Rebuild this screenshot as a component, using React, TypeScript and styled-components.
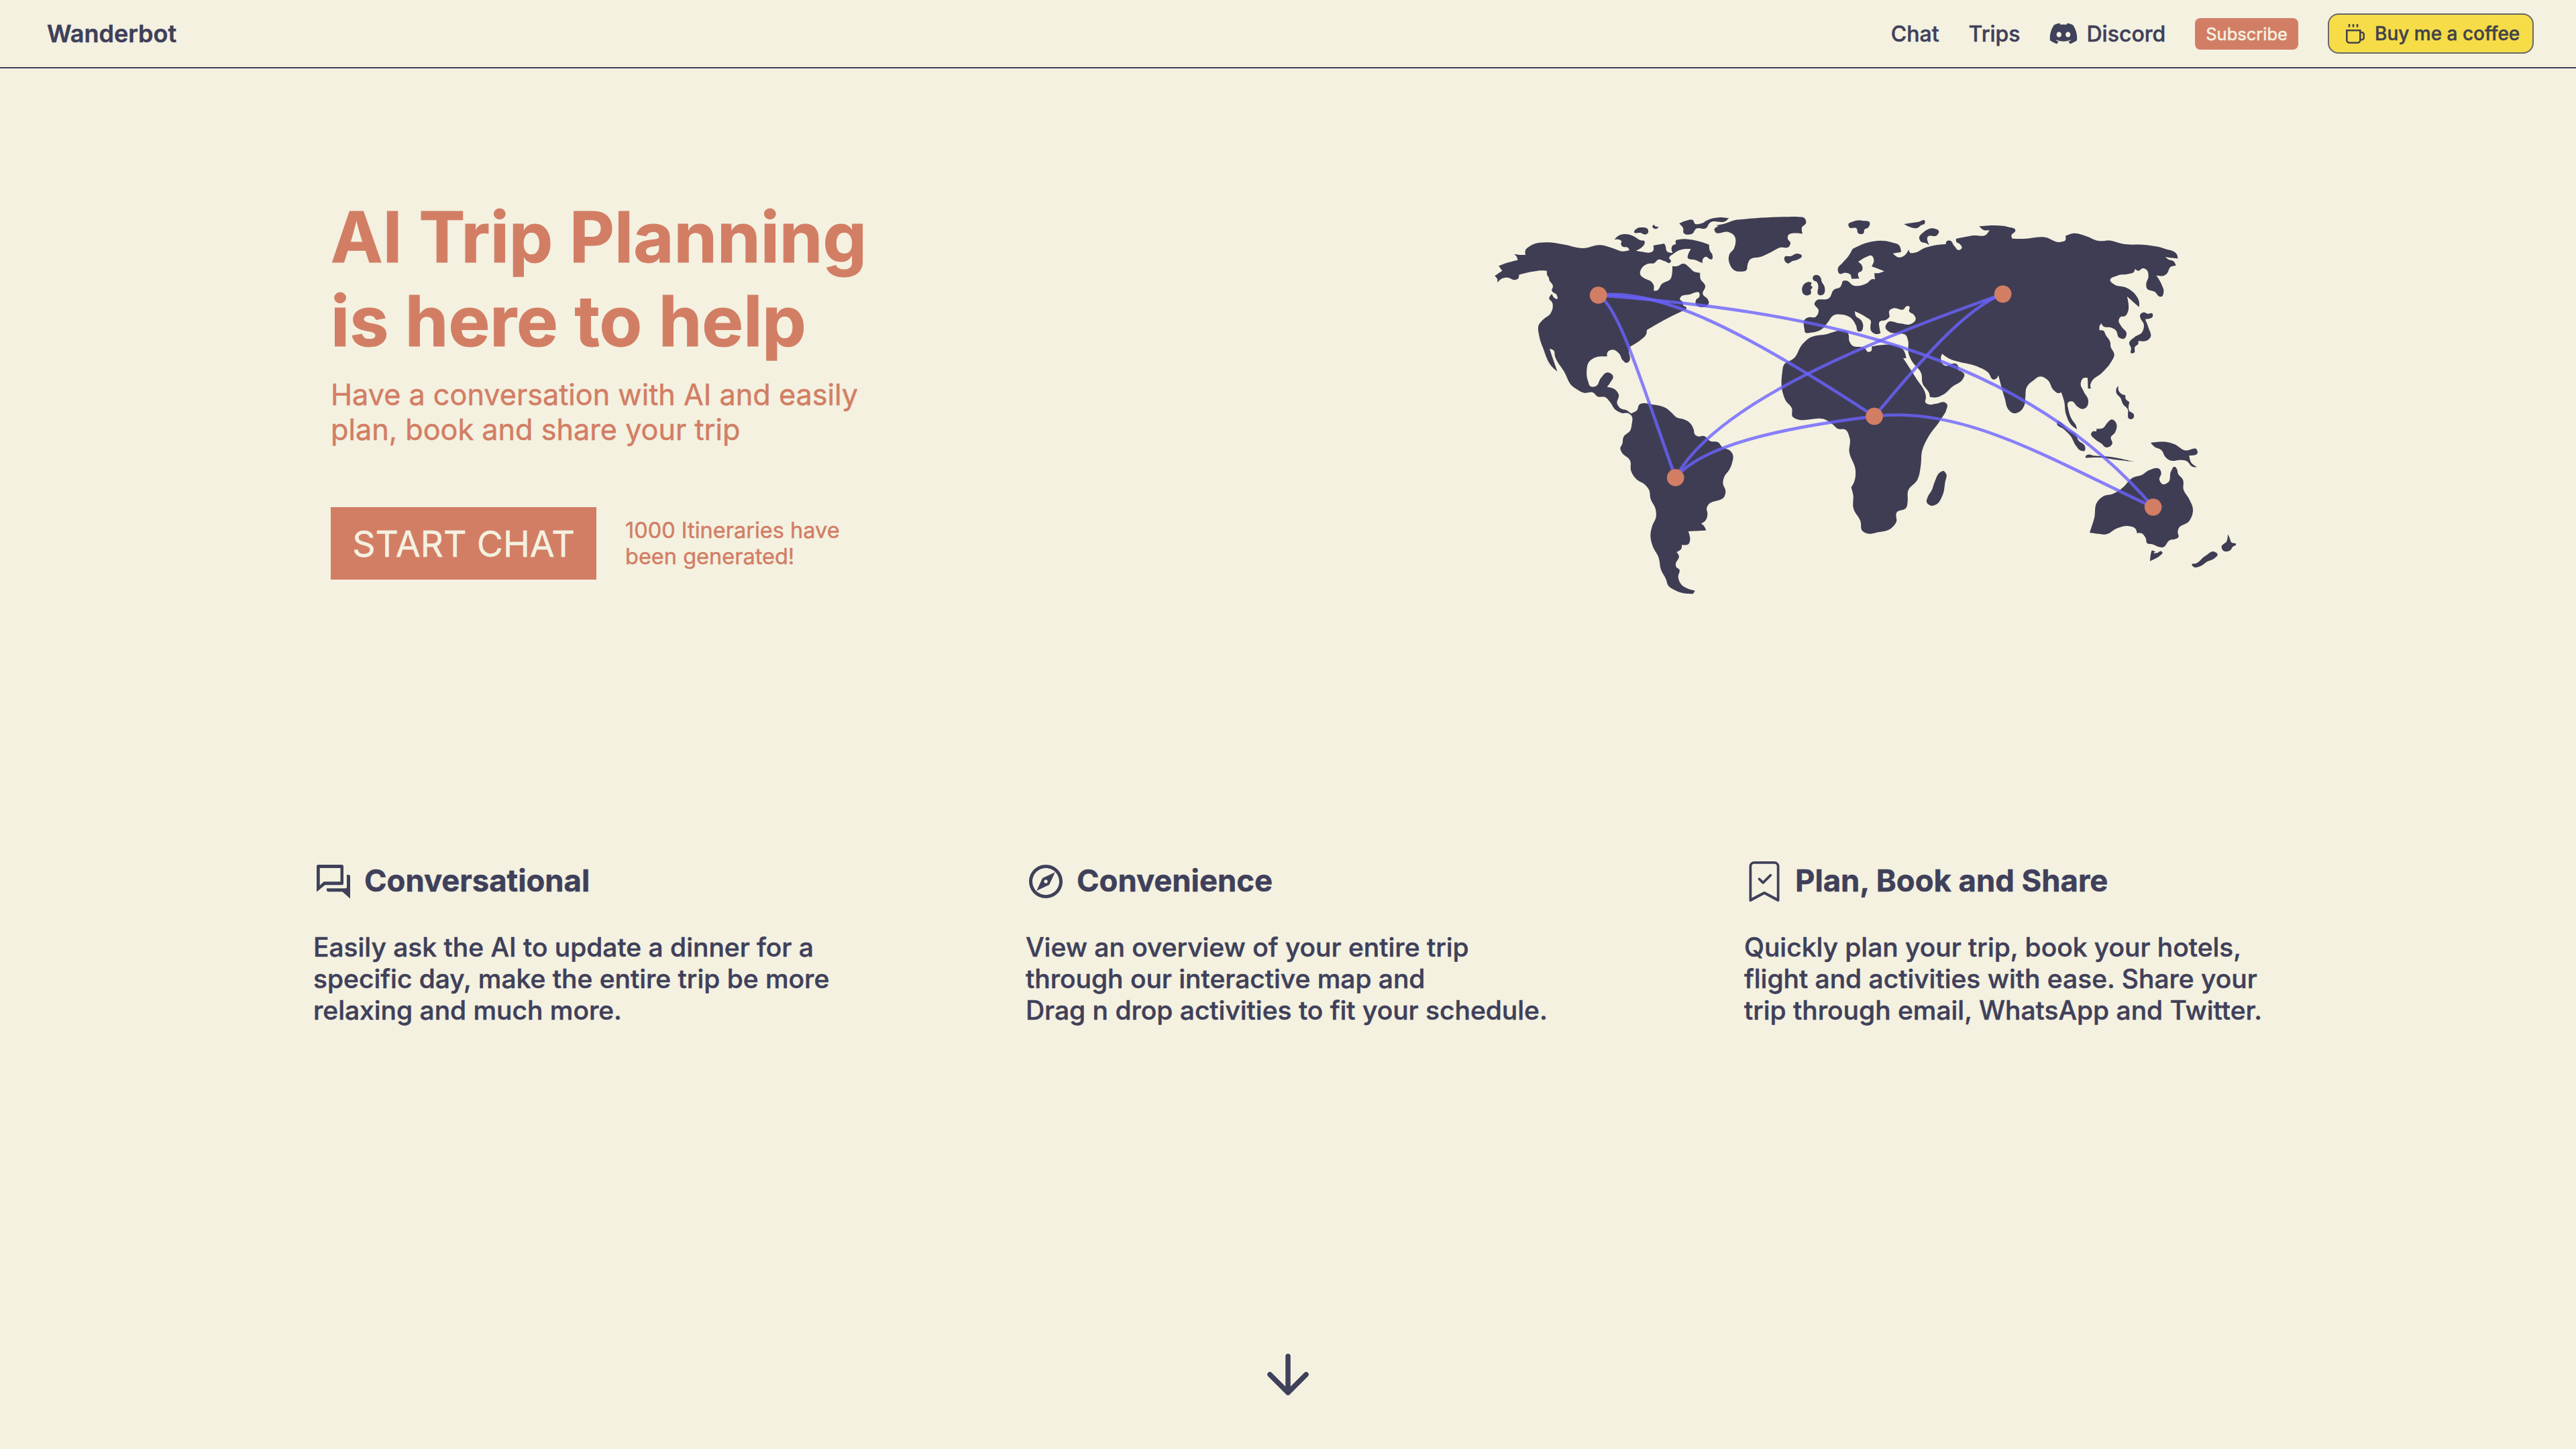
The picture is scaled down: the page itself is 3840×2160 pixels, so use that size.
import React from "react";
import styled, { createGlobalStyle } from "styled-components";
import { FaDiscord } from "react-icons/fa";
import { MdOutlineExplore } from "react-icons/md";
import { BsBookmarkCheck } from "react-icons/bs";

const cream = "#f4f1e0";
const navy = "#3f405a";
const clay = "#d27e65";
const land = "#3f3d53";
const route = "#6c63ff";

const GlobalStyle = createGlobalStyle`
  * { box-sizing: border-box; }
  body {
    margin: 0;
    background: ${cream};
    color: ${navy};
    font-family: Inter, "Liberation Sans", sans-serif;
    -webkit-text-stroke-width: 0.5px;
  }
  h1, h2, p { margin: 0; }
  svg { display: block; flex: none; }
`;

const Page = styled.div`
  width: 3840px;
  height: 2160px;
  display: flex;
  flex-direction: column;
  overflow: hidden;
`;

const Header = styled.header`
  display: flex;
  align-items: center;
  justify-content: space-between;
  height: 102px;
  padding: 0 63px 0 70px;
  border-bottom: 2px solid ${navy};
`;

const Brand = styled.span`
  font-size: 36px;
  font-weight: 600;
`;

const Nav = styled.nav`
  display: flex;
  align-items: center;
  gap: 44px;
`;

const NavLink = styled.a`
  display: flex;
  align-items: center;
  gap: 15px;
  font-size: 32px;
  font-weight: 500;
`;

const DiscordIcon = styled(FaDiscord)`
  width: 44px;
  height: 44px;
  margin: -2px;
`;

const SubscribeButton = styled.button`
  height: 47px;
  padding: 0 16px;
  border: 0;
  border-radius: 8px;
  background: ${clay};
  color: ${cream};
  font-family: inherit;
  font-size: 25.5px;
`;

const CoffeeButton = styled.button`
  display: flex;
  align-items: center;
  gap: 15px;
  width: 307px;
  height: 60px;
  padding: 0 0 0 25px;
  border: 2px solid #67676a;
  border-radius: 16px;
  background: #f6dd48;
  color: #43434a;
  font-family: inherit;
  font-size: 28px;
  font-weight: 500;
  white-space: nowrap;
`;

const Hero = styled.section`
  display: flex;
  justify-content: space-between;
  padding: 189px 507px 0 493px;
`;

const Pitch = styled.div`
  display: flex;
  flex-direction: column;
  color: ${clay};
`;

const Title = styled.h1`
  font-size: 103.8px;
  line-height: 125px;
  font-weight: 700;
  -webkit-text-stroke-width: 1px;
`;

const Subtitle = styled.p`
  margin-top: 21px;
  font-size: 43.2px;
  line-height: 52px;
`;

const Actions = styled.div`
  display: flex;
  align-items: center;
  gap: 43px;
  margin-top: 90px;
`;

const StartButton = styled.button`
  width: 396px;
  height: 108px;
  padding: 0;
  border: 0;
  background: ${clay};
  color: ${cream};
  font-family: inherit;
  font-size: 53.6px;
`;

const Counter = styled.p`
  font-size: 32.5px;
  line-height: 39px;
`;

const MapArt = styled.svg`
  margin-top: 19px;
`;

const Features = styled.section`
  display: flex;
  gap: 294px;
  margin-top: 394px;
  padding-left: 467px;
`;

const Feature = styled.article<{ $width: number }>`
  width: ${(p) => p.$width}px;
`;

const FeatureHead = styled.div`
  display: flex;
  align-items: center;
  gap: 16px;
  height: 60px;
`;

const FeatureTitle = styled.h2`
  padding-bottom: 4px;
  font-size: 45.4px;
  font-weight: 700;
  white-space: nowrap;
`;

const FeatureText = styled.p`
  margin-top: 44px;
  font-size: 38.95px;
  line-height: 47px;
  font-weight: 500;
  white-space: nowrap;
`;

const ScrollCue = styled.div`
  display: flex;
  justify-content: center;
  margin-top: auto;
  padding-bottom: 80px;
`;

type Vec = { x: number; y: number; corner: boolean };

/**
 * Turns a compact coastline into a smooth closed path.
 * "x,y" is a smooth point, "x,y!" a sharp one, "@x,y" moves the local origin.
 */
function coast(src: string): string {
  let ox = 0;
  let oy = 0;
  const pts: Vec[] = [];
  for (const token of src.trim().split(/\s+/)) {
    const [x, y] = token.replace(/[@!]/g, "").split(",").map(Number);
    if (token.startsWith("@")) {
      ox = x;
      oy = y;
    } else {
      pts.push({ x: x + ox, y: y + oy, corner: token.endsWith("!") });
    }
  }
  const n = pts.length;
  const tangent = (i: number) => {
    if (pts[i].corner) return { x: 0, y: 0 };
    const a = pts[(i + n - 1) % n];
    const p = pts[i];
    const b = pts[(i + 1) % n];
    const la = Math.hypot(p.x - a.x, p.y - a.y) || 1;
    const lb = Math.hypot(b.x - p.x, b.y - p.y) || 1;
    const tx = ((p.x - a.x) / la) * lb + ((b.x - p.x) / lb) * la;
    const ty = ((p.y - a.y) / la) * lb + ((b.y - p.y) / lb) * la;
    const l = Math.hypot(tx, ty) || 1;
    return { x: tx / l, y: ty / l };
  };
  let d = `M${pts[0].x},${pts[0].y}`;
  for (let i = 0; i < n; i++) {
    const p = pts[i];
    const q = pts[(i + 1) % n];
    const k = Math.hypot(q.x - p.x, q.y - p.y) * 0.36;
    const t = tangent(i);
    const u = tangent((i + 1) % n);
    d += `C${(p.x + t.x * k).toFixed(1)},${(p.y + t.y * k).toFixed(1)} ${(q.x - u.x * k).toFixed(1)},${(q.y - u.y * k).toFixed(1)} ${q.x},${q.y}`;
  }
  return d + "Z";
}

const coasts = [
  // The Americas
  `84,334! 118,311! 102,289! 140,275 187,263! 182,247 171,236! 200,240 222,240! 221,222 245,199 315,184 390,193
   480,210 557,196 610,209 660,224 687,219! 680,208 655,202 649,192 651,178 645,173 620,171! 640,153 668,147 705,156
   735,174 755,180 752,195 740,208 717,221! 745,226 775,230 792,223 794,198! 843,189! 848,200 856,225 880,231!
   875,210 880,198 895,192! 895,175 910,171 1043,194! 1047,222 1058,240 1054,260 1045,258 1030,248 1016,257 1013,277!
   985,264 947,250 950,237 962,213! 930,214 885,234 865,256 873,268 868,275 845,268 815,261 800,275 765,281 740,302
   735,326 755,345 785,360 796,378 795,400! 808,400 832,370 872,345 878,320 879,290! 897,291 930,279 955,296
   975,314 1003,320! 1004,345 1026,380 1015,415 1038,440 1042,455 1030,470 1010,474 985,463 984,443 1000,425
   1000,412 955,417 914,432 912,440! 926,452 927,467! 942,477 940,484! 870,517 765,576! 762,595 740,618 690,650!
   684,672 689,695 688,712 674,723 658,712 640,680 610,664 588,677 587,695! 540,697 505,720 496,755 502,805 513,828
   535,828 560,790 590,766 614,785 605,805 587,831! 620,840 639,865 632,905 650,928 675,935 694,949! 720,935
   733,908 745,904 785,908 850,925 880,950 897,966 930,975 958,992
   @420,840 554,180 560,203 572,211 600,210 630,233 662,237 683,260 715,274 728,290 726,330 715,358 690,395 685,418
   697,460 693,477 618,520 613,530 616,560 605,590 587,601! 600,612 610,632! 530,636! 538,675 532,692 501,697!
   500,712 478,729! 488,745 474,785 476,795 490,807 485,840 500,875 530,893 560,901! 552,914 535,915 470,899
   440,878 431,852 408,808 398,755 370,700 361,655 368,615 386,570 384,538 362,492 353,448 340,431 295,400 274,365
   270,320 232,282 226,265 235,245 240,215 272,182 277,160 275,118 262,108 232,107 205,93 180,58 162,38 122,32
   105,16 65,17 30,0 @0,0 433,828 395,762 353,690 349,668 330,660! 345,705 365,762! 345,745 300,655 284,605
   283,550 300,530 335,500 344,475 340,450 328,436 340,415! 352,433 363,437 362,420 340,400 345,380 328,350
   327,342! 319,330 318,312! 305,310 250,315 193,329! 190,345 178,351 140,341 118,345 96,364! 96,348`,
  // Arctic islands
  `708,138 720,122 742,117 770,127 769,143 760,148 735,141`,
  `789,113! 797,106 802,112 817,113! 812,121 795,121`,
  `909,100! 940,87 970,84 982,102 1000,101 1050,79 1095,72 1132,76! 1120,87 1045,98 1030,120 985,123 968,145
   950,149 930,143 927,120`,
  // Greenland
  `1075,107! 1110,101 1160,84 @1200,0 0,80 200,70 240,70 270,76 277,95 258,118 261,146! 195,157 195,168 207,187
   200,203 160,207 120,228 75,248 25,262 15,285 10,308 -15,314 @0,0 1155,308 1135,280 1133,240 1155,210 1152,150
   1130,138 1070,136 1067,125 1087,112!`,
  // Iceland, Svalbard, Franz Josef Land, Novaya Zemlya
  `@1200,0 181,250 210,245 237,234 258,246 245,258 215,268 195,278 181,265`,
  `@1200,0 466,105 490,90 530,87 562,97 555,117 537,128 535,142 510,143 503,122 470,116`,
  `@1200,0 715,102! 780,92 808,88 808,98 790,108 778,118`,
  `@1200,0 783,162 800,140 850,122 871,135 862,152 820,160 828,196! 815,188 790,180`,
  // Great Britain and Ireland
  `@1200,0 307,340 318,330 340,338 347,360 360,385 352,418 332,418 328,405 331,390 326,362 308,350`,
  `@1200,0 302,365! 299,378 305,383 298,395 299,412 265,415 259,400 275,365 292,361`,
  // Europe and Asia
  `@1200,0 270,575 275,525 290,519 318,518 333,490 315,455 320,447 380,433 402,395 430,383 440,357! 455,355
   490,377 550,366 575,348 585,350! 582,322! 600,322 627,313! 570,291! 580,262 570,244 545,250 510,271! 528,290
   527,310 510,322 515,346! 480,347! 475,328 455,320 425,323 419,303 440,275 468,243 485,213! 550,185 660,184
   695,200 702,227! 665,233! 690,251 720,240 736,215! 742,230 758,231 810,208 860,196 902,192! 905,180 920,176
   940,200 960,218 973,210 965,192 948,180 948,168! 1020,154 1085,147 1097,130! 1070,128 1051,112! 1120,108
   1180,115 1213,130 1195,155 1199,167! @2400,0 50,168 145,161 215,182 236,175 237,155! 270,144 320,153 385,177
   440,176 490,190 600,196 680,212 735,238 740,257! 684,250! 700,262 720,268 731,288! 710,292 688,326 673,334
   643,331! 668,375 676,405 665,427 655,425 640,408 600,388 598,370 608,335 598,305 582,300 563,311 548,302!
   544,315 520,325 470,332 437,355 455,372 510,387 550,418 567,455 566,473! 512,425! 515,497 505,512 482,518
   475,535 485,557 510,595 500,614 480,612 460,575 440,565 405,558 397,546! 389,560 389,577! 405,578 418,600
   437,630 439,650 455,685 440,720 400,767 352,810 348,825 351,837! 338,838! 336,790! 320,790 305,815 318,850
   339,895 330,922 312,929 290,918 265,895 254,896 252,940 265,975 285,1005 288,1020! 262,1000 240,955 230,890
   218,854! 205,858 185,845 155,797 125,784 95,800 62,835 58,870 52,915 30,942 5,948 @1200,0 1185,935 1165,880
   1145,810 1137,778! 1128,793 1118,797 1090,765 1040,738 960,718 915,703 885,682! 880,700 885,725 910,736 925,728
   950,728 958,740 957,755! 985,775 978,795 930,830 890,865 860,877 831,876! 828,860 798,815 792,770 750,715
   735,680 732,620 722,598 690,592 650,585 632,565 640,544 700,547 745,549 767,525 758,507 738,493 738,470
   728,469 712,484 670,478 650,488 648,520 635,530 605,540 605,565 610,590! 590,594 568,580 565,555 567,538
   540,515 495,492! 498,510 525,535 532,560 520,583 512,583 500,555 475,520 440,507 400,510 375,540 350,570
   300,587 272,585`,
  // Africa
  `@1200,0 440,579 370,594 290,613 260,640 225,700 175,737 171,760 175,865 185,890 213,925 219,966 228,971 370,980
   395,997 @1560,780 60,238 90,240 112,280 110,340 138,425 132,475 119,500! 127,530 129,595 160,650 170,695
   185,704 240,700 300,680 320,655 322,612 365,590 371,560 373,515 415,465 430,400 436,335 460,280 520,195 545,150
   548,130 540,121 500,125 465,128 451,120 453,98 @1200,0 765,785 711,702! 725,702! 712,665 700,655 570,650!
   568,670 555,674 540,658 480,642 470,625 467,598 460,583`,
  // Madagascar
  `@1560,780 520,430 530,426 541,435 538,480 525,540 500,575 475,581 456,565 460,545 480,510 492,475`,
  // Indonesia, the Philippines, Japan
  `@2520,780 79,213 83,203 95,208 125,240 165,265 172,285 205,320 203,335 185,335 165,315 140,270 110,240`,
  `@2520,780 232,258 240,249 255,250! 256,238! 285,234 305,210 325,196 341,208 338,255 320,275 326,305 297,320
   280,305 250,285`,
  `@2520,780 207,360 218,353 245,358 310,362 425,385! 330,374 280,367 207,368!`,
  `@2400,0 473,826! 476,850 490,863 505,867! 507,885 523,898! 521,935 543,955 540,970 520,972 516,955 517,935
   493,905 483,880 464,855 466,835`,
  `@2400,0 570,510 585,497 605,503 625,502 627,515 612,525 593,527! 608,565 616,610 605,621 563,625! 562,638
   548,650 543,678 532,680 530,655 522,635 545,608 580,585 587,550 572,522`,
  // New Guinea, Australia, Tasmania, New Zealand
  `@2520,780 498,300! 570,297 605,307 650,334 705,332 707,347 695,355 670,357! 680,390 706,409! 690,409 655,380
   630,377 585,379 565,365 545,332 515,318`,
  `@2520,780 605,407 616,420 620,437 642,465 645,510 670,552 687,600 670,650 622,685 619,700 622,722 610,730
   585,735 550,768 535,766 505,754 483,750 475,725 455,704 437,704! 430,685 400,673 350,682 295,710 270,708
   225,702! 245,640 262,560 285,540 330,528 370,503 420,455 460,443 490,423 540,421 545,435 537,465 555,486
   575,478 590,425`,
  `@2520,780 503,781! 520,787! 512,792 525,793 545,785 551,793 545,800 495,829! 498,800`,
  `@2520,780 843,708! 852,728 858,745 880,755 865,765 855,780 820,780 815,765 838,740`,
  `@2520,780 682,845 700,840 740,808 785,788 797,800 785,815 750,832 720,852 690,855`,
];

const routes = [
  "M548,420C640,470 740,810 893,1236",
  "M548,420C800,390 1150,545 1782,962",
  "M548,420C1450,490 2420,650 3029,1368",
  "M893,1236C1060,930 1650,662 2357,415",
  "M893,1236C1010,1095 1350,1015 1782,962",
  "M1782,962C1960,750 2180,480 2357,415",
  "M1782,962C2180,910 2600,1170 3029,1368",
];

const cities: [number, number][] = [
  [548, 420],
  [2357, 415],
  [1782, 962],
  [893, 1236],
  [3029, 1368],
];

const WorldMap = () => (
  <MapArt width="1112" height="580" viewBox="63 30 3336 1740">
    {coasts.map((c, i) => (
      <path key={i} d={coast(c)} fill={land} />
    ))}
    {routes.map((d) => (
      <path key={d} d={d} fill="none" stroke={route} strokeWidth="14" opacity="0.8" />
    ))}
    {cities.map(([x, y]) => (
      <circle key={x} cx={x} cy={y} r="38.5" fill={clay} />
    ))}
  </MapArt>
);

const ChatIcon = () => (
  <svg width="60" height="60" viewBox="0 0 24 24" fill="currentColor">
    <path
      fillRule="evenodd"
      d="M3 2h14a1 1 0 0 1 1 1v10.100a1 1 0 0 1-1 1H7L2 18.200V3a1 1 0 0 1 1-1zm.9 2v10.300L6.300 12.100h9.900V4z"
    />
    <path d="M20 8h1a1 1 0 0 1 1 1v13.200L17.300 18.100H9a1 1 0 0 1-1-1v-1h11a1 1 0 0 0 1-1z" />
  </svg>
);

const CoffeeIcon = () => (
  <svg width="28" height="29" viewBox="0 0 28 29" fill="none" stroke="currentColor" strokeWidth="2.6">
    <path d="M1.3 9.3h20v14.4a4 4 0 0 1-4 4h-12a4 4 0 0 1-4-4z" />
    <path d="M21.3 12.3h2.400a3 3 0 0 1 3 3v5a3 3 0 0 1-3 3h-2.400" />
    <path d="M5 0v4.500M11 0v4.500M17 0v4.500" />
  </svg>
);

const ArrowDown = () => (
  <svg width="62" height="62" viewBox="0 0 62 62" fill="none" stroke="currentColor" strokeWidth="7.5" strokeLinecap="round" strokeLinejoin="round">
    <path d="M31 3.800v54M4 31l27 27 27-27" />
  </svg>
);

const features = [
  {
    title: "Conversational",
    width: 768,
    icon: <ChatIcon />,
    lines: ["Easily ask the AI to update a dinner for a", "specific day, make the entire trip be more", "relaxing and much more."],
  },
  {
    title: "Convenience",
    width: 777,
    icon: <MdOutlineExplore size={60} />,
    lines: ["View an overview of your entire trip", "through our interactive map and", "Drag n drop activities to fit your schedule."],
  },
  {
    title: "Plan, Book and Share",
    width: 776,
    icon: <BsBookmarkCheck size={60} />,
    lines: ["Quickly plan your trip, book your hotels,", "flight and activities with ease. Share your", "trip through email, WhatsApp and Twitter."],
  },
];

export default function App() {
  return (
    <Page>
      <GlobalStyle />
      <Header>
        <Brand>Wanderbot</Brand>
        <Nav>
          <NavLink>Chat</NavLink>
          <NavLink>Trips</NavLink>
          <NavLink>
            <DiscordIcon />
            Discord
          </NavLink>
          <SubscribeButton>Subscribe</SubscribeButton>
          <CoffeeButton>
            <CoffeeIcon />
            Buy me a coffee
          </CoffeeButton>
        </Nav>
      </Header>
      <Hero>
        <Pitch>
          <Title>
            AI Trip Planning
            <br />
            is here to help
          </Title>
          <Subtitle>
            Have a conversation with AI and easily
            <br />
            plan, book and share your trip
          </Subtitle>
          <Actions>
            <StartButton>START CHAT</StartButton>
            <Counter>
              1000 Itineraries have
              <br />
              been generated!
            </Counter>
          </Actions>
        </Pitch>
        <WorldMap />
      </Hero>
      <Features>
        {features.map((f) => (
          <Feature key={f.title} $width={f.width}>
            <FeatureHead>
              {f.icon}
              <FeatureTitle>{f.title}</FeatureTitle>
            </FeatureHead>
            <FeatureText>
              {f.lines.map((line) => (
                <React.Fragment key={line}>
                  {line}
                  <br />
                </React.Fragment>
              ))}
            </FeatureText>
          </Feature>
        ))}
      </Features>
      <ScrollCue>
        <ArrowDown />
      </ScrollCue>
    </Page>
  );
}
